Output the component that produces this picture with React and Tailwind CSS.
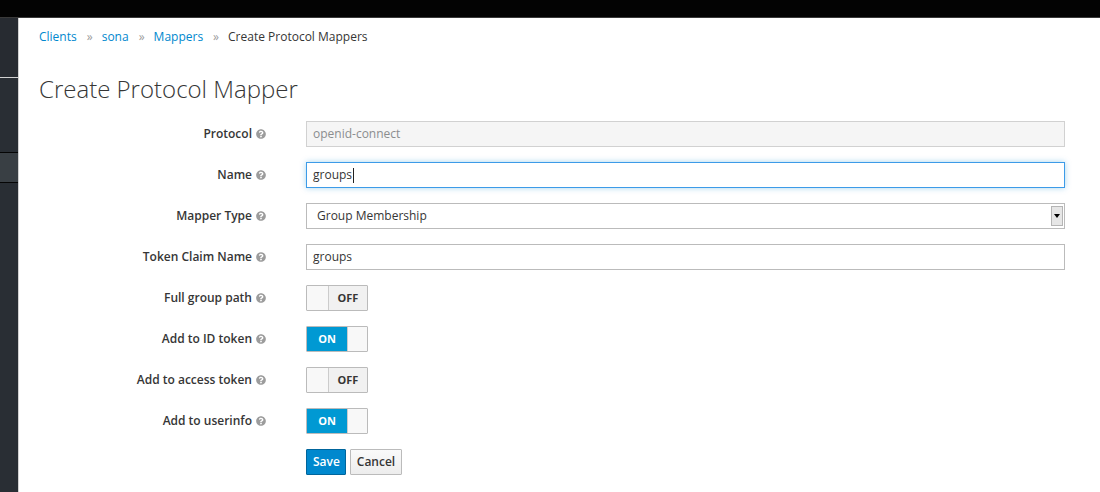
import React from "react";
import { FaQuestionCircle } from "react-icons/fa";

const Help = () => (
  <FaQuestionCircle className="ml-[4px] inline-block text-[#9c9c9c]" size={10} />
);

const Row = ({ label, children }) => (
  <div className="flex items-center gap-[40px] h-[26px]">
    <div className="w-[227px] flex items-center justify-end text-[12px] font-semibold text-[#363636]">
      {label}
      <Help />
    </div>
    <div className="flex-1">{children}</div>
  </div>
);

const Toggle = ({ on }) =>
  on ? (
    <div className="flex w-[62px] h-[26px] border border-[#bbbbbb] rounded-[1px] overflow-hidden">
      <div className="w-[40px] bg-[#0099d3] text-white text-[11px] font-bold flex items-center justify-center">
        ON
      </div>
      <div className="flex-1 bg-[#f8f8f8] border-l border-[#cccccc]" />
    </div>
  ) : (
    <div className="flex w-[62px] h-[26px] border border-[#bbbbbb] rounded-[1px] overflow-hidden">
      <div className="w-[22px] bg-[#f8f8f8] border-r border-[#cccccc]" />
      <div className="flex-1 bg-[#f1f1f1] text-[#363636] text-[11px] font-bold flex items-center justify-center">
        OFF
      </div>
    </div>
  );

export default function App() {
  return (
    <div
      className="w-[1100px] h-[492px] overflow-hidden bg-white flex flex-col"
      style={{ fontFamily: '"Open Sans", "Liberation Sans", sans-serif' }}
    >
      <div className="h-[18px] bg-[#030303] border-b border-[#3a3a3a] shrink-0" />
      <div className="flex flex-1">
        {/* sidebar */}
        <div className="w-[19px] border-r border-[#d1d1d1] bg-[#292e34] flex flex-col">
          <div className="h-[60px] bg-[#272b31] border-b border-[#d1d1d1]" />
          <div className="h-[75px] border-b border-[#050505]" />
          <div className="h-[30px] bg-[#393f44] border-b border-[#050505]" />
          <div className="flex-1" />
        </div>

        <div className="flex-1 pl-[20px] pr-[35px]">
          {/* breadcrumb */}
          <div className="mt-[10px] h-[18px] flex items-center text-[12px] text-[#363636]">
            <span className="text-[#0088ce]">Clients</span>
            <span className="ml-[10px] mr-[9px] text-[#9c9c9c] text-[12px]">»</span>
            <span className="text-[#0088ce]">sona</span>
            <span className="ml-[10px] mr-[9px] text-[#9c9c9c] text-[12px]">»</span>
            <span className="text-[#0088ce]">Mappers</span>
            <span className="ml-[10px] mr-[9px] text-[#9c9c9c] text-[12px]">»</span>
            <span>Create Protocol Mappers</span>
          </div>

          <h1 className="mt-[28px] h-[30px] leading-[30px] text-[24px] font-light text-[#363636]">
            Create Protocol Mapper
          </h1>

          <div className="mt-[17px] flex flex-col gap-[15px]">
            <Row label="Protocol">
              <div className="h-[26px] border border-[#d1d1d1] bg-[#f5f5f5] px-[6px] flex items-center text-[12px] text-[#8b8d8f]">
                openid-connect
              </div>
            </Row>
            <Row label="Name">
              <div className="h-[26px] border border-[#3c9be8] bg-white px-[6px] flex items-center text-[12px] text-[#363636] shadow-[0_0_6px_rgba(0,136,206,0.35)]">
                groups
                <span className="ml-[1px] w-px h-[15px] bg-[#222]" />
              </div>
            </Row>
            <Row label="Mapper Type">
              <div className="h-[26px] border border-[#bbbbbb] bg-white pl-[10px] pr-[1px] flex items-center text-[12px] text-[#363636]">
                <span className="flex-1">Group Membership</span>
                <span className="w-[12px] h-[20px] bg-[#e6e6e6] border border-[#b5b5b5] flex items-center justify-center">
                  <span className="w-0 h-0 border-l-[3px] border-r-[3px] border-t-[4px] border-l-transparent border-r-transparent border-t-black" />
                </span>
              </div>
            </Row>
            <Row label="Token Claim Name">
              <div className="h-[26px] border border-[#bbbbbb] bg-white px-[6px] flex items-center text-[12px] text-[#363636]">
                groups
              </div>
            </Row>
            <Row label="Full group path">
              <Toggle on={false} />
            </Row>
            <Row label="Add to ID token">
              <Toggle on />
            </Row>
            <Row label="Add to access token">
              <Toggle on={false} />
            </Row>
            <Row label="Add to userinfo">
              <Toggle on />
            </Row>
            <div className="flex gap-[40px] h-[26px]">
              <div className="w-[227px]" />
              <div className="flex gap-[4px]">
                <button className="h-[26px] px-[6px] w-[40px] bg-[#0088ce] border border-[#00659c] text-white text-[12px] font-semibold rounded-[1px]">
                  Save
                </button>
                <button className="h-[26px] w-[52px] bg-gradient-to-b from-[#fafafa] to-[#ededed] border border-[#bbbbbb] text-[#363636] text-[12px] font-semibold rounded-[1px]">
                  Cancel
                </button>
              </div>
            </div>
          </div>
        </div>
      </div>
    </div>
  );
}
